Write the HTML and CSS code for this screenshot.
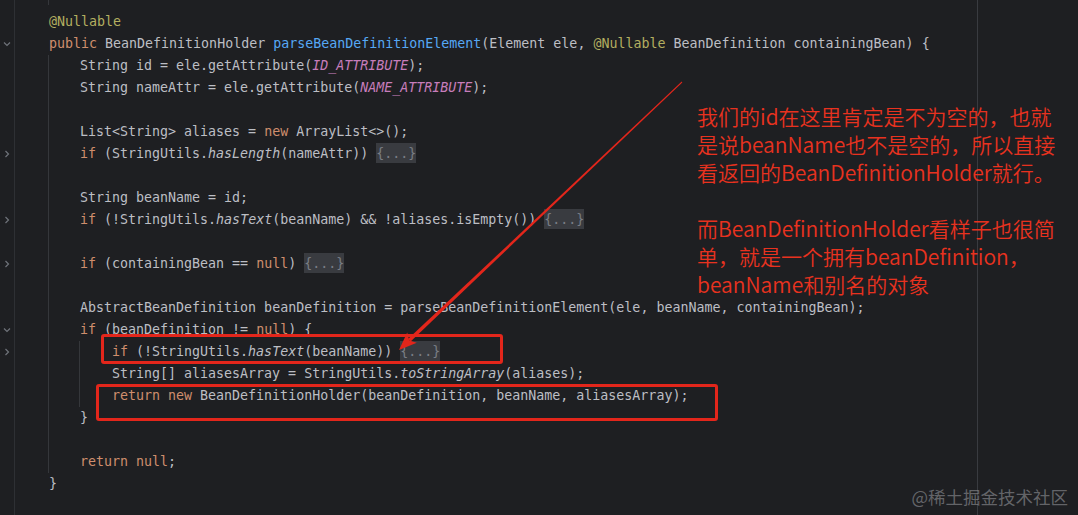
FILE: index.html
```html
<!DOCTYPE html>
<html lang="zh">
<head>
<meta charset="utf-8">
<title>parseBeanDefinitionElement</title>
<link rel="stylesheet" href="styles.css">
</head>
<body>
<div class="editor">
  <div class="gutter">
    <div class="g"></div>
    <div class="g"><svg class="chev" viewBox="0 0 10 10"><path d="M2 3.5 L5 6.5 L8 3.5"/></svg></div>
    <div class="g"></div><div class="g"></div><div class="g"></div><div class="g"></div>
    <div class="g"><svg class="chev" viewBox="0 0 10 10"><path d="M3.5 2 L6.5 5 L3.5 8"/></svg></div>
    <div class="g"></div><div class="g"></div>
    <div class="g"><svg class="chev" viewBox="0 0 10 10"><path d="M3.5 2 L6.5 5 L3.5 8"/></svg></div>
    <div class="g"></div>
    <div class="g"><svg class="chev" viewBox="0 0 10 10"><path d="M3.5 2 L6.5 5 L3.5 8"/></svg></div>
    <div class="g"></div><div class="g"></div>
    <div class="g"><svg class="chev" viewBox="0 0 10 10"><path d="M2 3.5 L5 6.5 L8 3.5"/></svg></div>
    <div class="g"><svg class="chev" viewBox="0 0 10 10"><path d="M3.5 2 L6.5 5 L3.5 8"/></svg></div>
  </div>
  <div class="code">
    <div class="tail"></div>
    <div class="ln"><span class="ann">@Nullable</span></div>
    <div class="ln"><span class="kw">public</span> BeanDefinitionHolder <span class="fn">parseBeanDefinitionElement</span>(Element ele, <span class="ann">@Nullable</span> BeanDefinition containingBean) {</div>
    <div class="block">
      <div class="ln">String id = ele.getAttribute(<span class="const">ID_ATTRIBUTE</span>);</div>
      <div class="ln">String nameAttr = ele.getAttribute(<span class="const">NAME_ATTRIBUTE</span>);</div>
      <div class="ln"></div>
      <div class="ln">List&lt;String&gt; aliases = <span class="kw">new</span> ArrayList&lt;&gt;();</div>
      <div class="ln"><span class="kw">if</span> (StringUtils.<i>hasLength</i>(nameAttr)) <span class="fold">{...}</span></div>
      <div class="ln"></div>
      <div class="ln">String beanName = id;</div>
      <div class="ln"><span class="kw">if</span> (!StringUtils.<i>hasText</i>(beanName) &amp;&amp; !aliases.isEmpty()) <span class="fold">{...}</span></div>
      <div class="ln"></div>
      <div class="ln"><span class="kw">if</span> (containingBean == <span class="kw">null</span>) <span class="fold">{...}</span></div>
      <div class="ln"></div>
      <div class="ln">AbstractBeanDefinition beanDefinition = parseBeanDefinitionElement(ele, beanName, containingBean);</div>
      <div class="ln"><span class="kw">if</span> (beanDefinition != <span class="kw">null</span>) {</div>
      <div class="block inner">
        <div class="ln"><span class="kw">if</span> (!StringUtils.<i>hasText</i>(beanName)) <span class="fold">{...}</span></div>
        <div class="ln">String[] aliasesArray = StringUtils.<i>toStringArray</i>(aliases);</div>
        <div class="ln"><span class="kw">return new</span> BeanDefinitionHolder(beanDefinition, beanName, aliasesArray);</div>
      </div>
      <div class="ln">}</div>
      <div class="ln"></div>
      <div class="ln"><span class="kw">return null</span>;</div>
    </div>
    <div class="ln">}</div>
  </div>

  <div class="margin-line"></div>

  <div class="box box1"></div>
  <div class="box box2"></div>

  <svg class="arrow" viewBox="0 0 1078 515" width="1078" height="515">
    <polygon points="682.3,82.4 681.7,81.6 408.0,339.1 410.4,341.7" />
    <polygon points="399,350 416.8,342.7 409.2,340.4 407.2,332.5" />
  </svg>

  <div class="note">
    <p>我们的id在这里肯定是不为空的，也就是说beanName也不是空的，所以直接看返回的BeanDefinitionHolder就行。</p>
    <p>而BeanDefinitionHolder看样子也很简单，就是一个拥有beanDefinition，beanName和别名的对象</p>
  </div>

  <div class="watermark">@稀土掘金技术社区</div>
</div>
</body>
</html>
```
FILE: styles.css
```css
html, body {
  margin: 0;
  padding: 0;
  background: #1e1f22;
}

.editor {
  position: relative;
  width: 1078px;
  height: 515px;
  overflow: hidden;
  display: flex;
  background: #1e1f22;
  font-family: "DejaVu Sans Mono", "Liberation Mono", monospace;
  font-size: 13.3px;
  color: #bcbec4;
}

.gutter {
  width: 14px;
  flex: none;
  border-right: 1px solid #2e3034;
  padding-top: 11px;
  box-sizing: content-box;
}

.g {
  height: 22px;
  display: flex;
  align-items: center;
}

.chev {
  width: 10px;
  height: 10px;
  margin-left: 2px;
  fill: none;
  stroke: #6f737a;
  stroke-width: 1.2;
}

.code {
  flex: 1;
  padding-left: 33px;
  padding-top: 0;
}

.tail {
  height: 5px;
  border-left: 1px solid #35373b;
  margin-bottom: 6px;
}

.ln {
  height: 22px;
  line-height: 22px;
  white-space: pre;
  padding-left: 1px;
}

.block {
  border-left: 1px solid #35373b;
  padding-left: 31px;
}

.block .ln {
  padding-left: 0;
}

.block.inner {
  margin-left: -1px;
  padding-left: 32px;
}

.kw { color: #cf8e6d; }
.ann { color: #b3ae60; }
.fn { color: #56a8f5; }
.const { color: #c77dbb; font-style: italic; }
i { font-style: italic; }

.fold {
  background: #393b40;
  color: #7a7e85;
  padding: 3px 0 2px;
}

.margin-line {
  position: absolute;
  left: 977px;
  top: 0;
  width: 1px;
  height: 515px;
  background: #393b40;
}

.box {
  position: absolute;
  border: 3px solid #e3261b;
  border-radius: 3px;
  box-sizing: border-box;
}

.box1 {
  left: 101px;
  top: 334px;
  width: 402px;
  height: 30px;
}

.box2 {
  left: 96px;
  top: 384px;
  width: 622px;
  height: 37px;
}

.arrow {
  position: absolute;
  left: 0;
  top: 0;
  fill: #e3261b;
}

.note {
  position: absolute;
  left: 697px;
  top: 102px;
  width: 370px;
  font-family: "Noto Sans CJK SC", "Noto Sans", sans-serif;
  font-size: 21px;
  font-weight: 350;
  line-height: 28px;
  color: #e8321f;
}

.note p {
  margin: 0 0 28px;
}

.watermark {
  position: absolute;
  right: 10px;
  bottom: 6px;
  font-family: "Noto Sans CJK SC", sans-serif;
  font-size: 17.5px;
  line-height: 24px;
  color: rgba(160, 162, 166, 0.55);
}
```
